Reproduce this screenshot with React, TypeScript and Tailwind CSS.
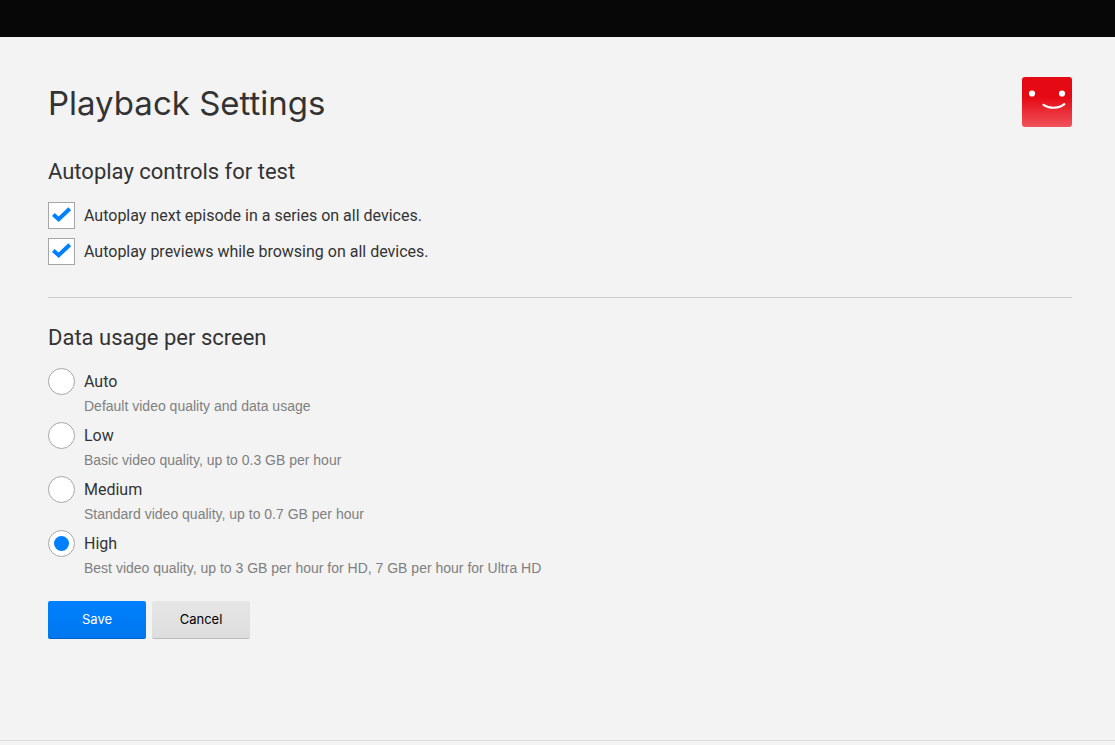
import { useState } from "react";

const autoplayOptions = [
  { id: "next-episode", label: "Autoplay next episode in a series on all devices." },
  { id: "previews", label: "Autoplay previews while browsing on all devices." },
];

const dataOptions = [
  { id: "auto", label: "Auto", hint: "Default video quality and data usage" },
  { id: "low", label: "Low", hint: "Basic video quality, up to 0.3 GB per hour" },
  { id: "medium", label: "Medium", hint: "Standard video quality, up to 0.7 GB per hour" },
  { id: "high", label: "High", hint: "Best video quality, up to 3 GB per hour for HD, 7 GB per hour for Ultra HD" },
];

function Avatar() {
  return (
    <svg viewBox="0 0 50 50" className="size-[50px] shrink-0" role="img" aria-label="Profile">
      <defs>
        <linearGradient id="avatar-red" x1="0" y1="0" x2="0" y2="1">
          <stop offset="0" stopColor="#e50914" />
          <stop offset="0.4" stopColor="#e50914" />
          <stop offset="1" stopColor="#f0525c" />
        </linearGradient>
      </defs>
      <rect width="50" height="50" rx="3" fill="url(#avatar-red)" />
      <circle cx="10" cy="16.5" r="3.1" fill="#fff" />
      <circle cx="40" cy="16.5" r="3.1" fill="#fff" />
      <path d="M21.5 27.8C27 31.8 37 31.8 42.3 27.2" fill="none" stroke="#fff" strokeWidth="2.2" strokeLinecap="round" />
    </svg>
  );
}

export default function App() {
  const [autoplay, setAutoplay] = useState(["next-episode", "previews"]);
  const [quality, setQuality] = useState("high");

  const toggle = (id: string) =>
    setAutoplay((prev) => (prev.includes(id) ? prev.filter((x) => x !== id) : [...prev, id]));

  return (
    <div className="flex min-h-screen flex-col bg-[#f3f3f3] font-['Roboto',sans-serif] text-[#333]">
      <header className="h-[37px] bg-[#070707]" />

      <main className="grow pt-10 pr-[43px] pb-10 pl-12">
        <div className="flex items-start justify-between">
          <h1 className="font-['Inter',sans-serif] text-[33px] leading-[52px]">Playback Settings</h1>
          <Avatar />
        </div>

        <form onSubmit={(e) => e.preventDefault()}>
          {/* Autoplay */}
          <section className="border-b border-[#ccc] pt-[29px] pb-8">
            <h2 className="text-[22px] leading-7">Autoplay controls for test</h2>
            <ul className="mt-4 space-y-[9px]">
              {autoplayOptions.map((option) => (
                <li key={option.id} className="flex items-center gap-[9px]">
                  <span className="relative size-[27px]">
                    <input
                      id={option.id}
                      type="checkbox"
                      checked={autoplay.includes(option.id)}
                      onChange={() => toggle(option.id)}
                      className="peer block size-[27px] appearance-none border border-[#a6a6a6] bg-white"
                    />
                    <svg
                      viewBox="0 0 27 27"
                      className="pointer-events-none absolute inset-0 hidden size-[27px] peer-checked:block"
                      aria-hidden="true"
                    >
                      <path d="M5.3 12.4L10.7 17.2L21.7 6.7" fill="none" stroke="#0080ff" strokeWidth="4" />
                    </svg>
                  </span>
                  <label htmlFor={option.id} className="text-base leading-6">
                    {option.label}
                  </label>
                </li>
              ))}
            </ul>
          </section>

          {/* Data usage */}
          <fieldset className="pt-[26px]">
            <legend className="float-left w-full text-[22px] leading-7">Data usage per screen</legend>
            <ul className="clear-both pt-4">
              {dataOptions.map((option) => (
                <li key={option.id} className="h-[54px]">
                  <div className="flex items-center gap-[9px]">
                    <input
                      id={option.id}
                      type="radio"
                      name="quality"
                      checked={quality === option.id}
                      onChange={() => setQuality(option.id)}
                      aria-describedby={`${option.id}-hint`}
                      className="grid size-[27px] appearance-none place-items-center rounded-full border border-[#a6a6a6] bg-white before:size-[15px] before:rounded-full checked:before:bg-[#0080ff]"
                    />
                    <label htmlFor={option.id} className="text-base leading-6">
                      {option.label}
                    </label>
                  </div>
                  <p
                    id={`${option.id}-hint`}
                    className="pl-9 font-['Liberation_Sans',sans-serif] text-sm leading-[22px] text-[#808080]"
                  >
                    {option.hint}
                  </p>
                </li>
              ))}
            </ul>
          </fieldset>

          <div className="mt-[17px] flex gap-[6px] font-['Inter',sans-serif] text-[13px]">
            <button
              type="submit"
              className="h-[38px] w-[98px] rounded-xs border-b border-[#0064c8] bg-linear-to-b from-[#0080ff] to-[#0077ee] text-white"
            >
              Save
            </button>
            <button
              type="button"
              className="h-[38px] w-[98px] rounded-xs border-b border-[#bbb] bg-linear-to-b from-[#e6e6e6] to-[#ddd] text-black"
            >
              Cancel
            </button>
          </div>
        </form>
      </main>

      <footer className="h-[5px] border-t border-[#ddd]" />
    </div>
  );
}
